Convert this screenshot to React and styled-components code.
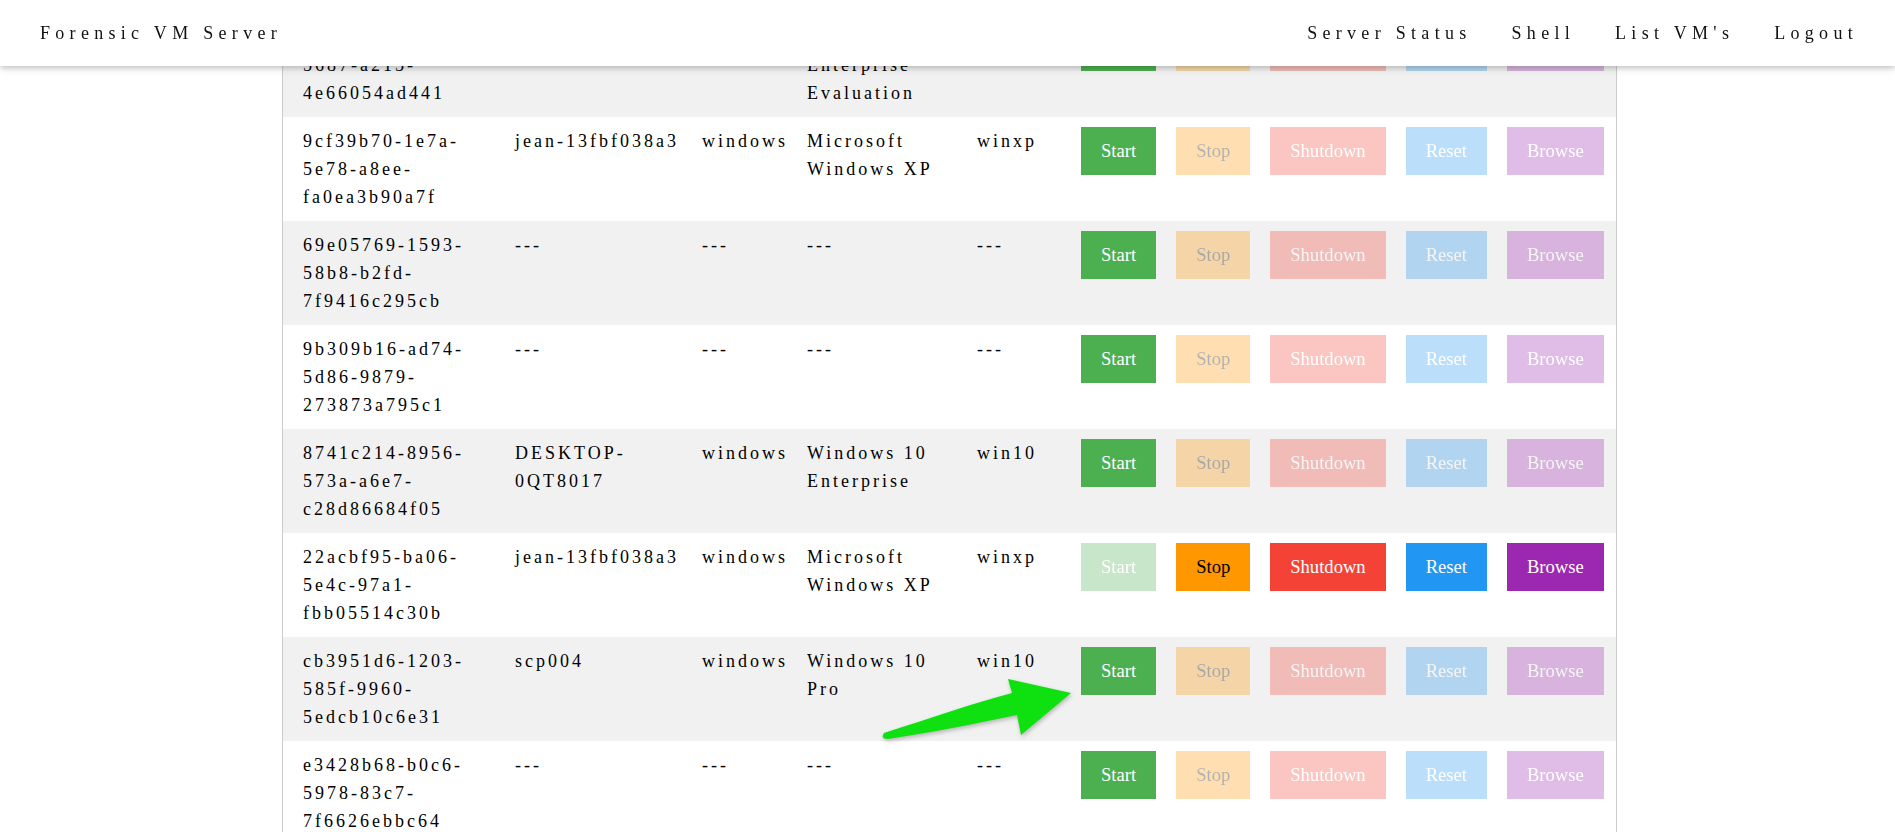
import React from 'react';
import styled, { createGlobalStyle } from "styled-components";

const Global = createGlobalStyle`
html, body {
  margin: 0;
  padding: 0;
  overflow: hidden;
  background: #fff;
  font-family: "Liberation Serif", "Times New Roman", serif;
  color: #000;
}
`

const TopBar = styled.div`
position: fixed;
top: 0;
left: 0;
right: 0;
height: 66px;
display: flex;
align-items: center;
padding: 0 17px 0 20px;
background: #fff;
box-shadow: 0 2px 5px 0 rgba(0,0,0,0.16), 0 2px 10px 0 rgba(0,0,0,0.12);
z-index: 2;
`
const Brand = styled.div`
padding: 0 20px;
font-size: 18px;
letter-spacing: 5.3px;
color: #111;
`
const NavLinks = styled.div`
margin-left: auto;
display: flex;
`
const NavLink = styled.a`
padding: 0 20px;
font-size: 18px;
letter-spacing: 5.3px;
color: #111;
text-decoration: none;
`
const Page = styled.div`
padding-top: 13px;
`
const Tabela = styled.div`
width: 1333px;
margin: 0 0 0 282px;
border-left: 1px solid #ccc;
border-right: 1px solid #ccc;
`
const Linha = styled.div`
display: grid;
grid-template-columns: 212px 187px 105px 170px 104px 1fr;
padding: 10px 0 10px 20px;
background: ${p => p.cinza ? '#f1f1f1' : '#fff'};
font-size: 18px;
line-height: 28px;
letter-spacing: 3px;
`
const Celula = styled.div`
padding-right: 16px;
`
const Acoes = styled.div`
display: flex;
gap: 20px;
align-items: flex-start;
`
const Botao = styled.button`
border: none;
padding: 10px 20px;
font-family: "Liberation Serif", "Times New Roman", serif;
font-size: 18.6px;
line-height: 28px;
letter-spacing: 0;
background: ${p => p.cor};
color: ${p => p.texto};
opacity: ${p => p.desligado ? 0.3 : 1};
cursor: ${p => p.desligado ? 'not-allowed' : 'pointer'};
`
const Seta = styled.svg`
position: absolute;
left: 0;
top: 0;
width: 1895px;
height: 832px;
pointer-events: none;
z-index: 1;
filter: drop-shadow(1px 2px 2px rgba(0,0,0,0.25));
`

const maquinas = [
  { id: "3f1ad4c2-73b0-5687-a215-4e66054ad441", nome: "MSEDGEWIN10", os: "windows", osNome: "Windows 10 Enterprise Evaluation", tipo: "win10", ligada: false },
  { id: "9cf39b70-1e7a-5e78-a8ee-fa0ea3b90a7f", nome: "jean-13fbf038a3", os: "windows", osNome: "Microsoft Windows XP", tipo: "winxp", ligada: false },
  { id: "69e05769-1593-58b8-b2fd-7f9416c295cb", nome: "---", os: "---", osNome: "---", tipo: "---", ligada: false },
  { id: "9b309b16-ad74-5d86-9879-273873a795c1", nome: "---", os: "---", osNome: "---", tipo: "---", ligada: false },
  { id: "8741c214-8956-573a-a6e7-c28d86684f05", nome: "DESKTOP-0QT8017", os: "windows", osNome: "Windows 10 Enterprise", tipo: "win10", ligada: false },
  { id: "22acbf95-ba06-5e4c-97a1-fbb05514c30b", nome: "jean-13fbf038a3", os: "windows", osNome: "Microsoft Windows XP", tipo: "winxp", ligada: true },
  { id: "cb3951d6-1203-585f-9960-5edcb10c6e31", nome: "scp004", os: "windows", osNome: "Windows 10 Pro", tipo: "win10", ligada: false },
  { id: "e3428b68-b0c6-5978-83c7-7f6626ebbc64", nome: "---", os: "---", osNome: "---", tipo: "---", ligada: false },
]

export default class App extends React.Component {
  render() {
    const linhas = maquinas.map((m, i) => {
      return (
        <Linha key={m.id} cinza={i % 2 === 0}>
          <Celula>{m.id}</Celula>
          <Celula>{m.nome}</Celula>
          <Celula>{m.os}</Celula>
          <Celula>{m.osNome}</Celula>
          <Celula>{m.tipo}</Celula>
          <Acoes>
            <Botao cor="#4CAF50" texto="#fff" desligado={m.ligada}>Start</Botao>
            <Botao cor="#ff9800" texto="#000" desligado={!m.ligada}>Stop</Botao>
            <Botao cor="#f44336" texto="#fff" desligado={!m.ligada}>Shutdown</Botao>
            <Botao cor="#2196F3" texto="#fff" desligado={!m.ligada}>Reset</Botao>
            <Botao cor="#9c27b0" texto="#fff" desligado={!m.ligada}>Browse</Botao>
          </Acoes>
        </Linha>
      )
    })
    return (
      <>
        <Global />
        <TopBar>
          <Brand>Forensic VM Server</Brand>
          <NavLinks>
            <NavLink href="#">Server Status</NavLink>
            <NavLink href="#">Shell</NavLink>
            <NavLink href="#">List VM's</NavLink>
            <NavLink href="#">Logout</NavLink>
          </NavLinks>
        </TopBar>
        <Page>
          <Tabela>{linhas}</Tabela>
        </Page>
        <Seta viewBox="0 0 1895 832">
          <path
            d="M 884 733 C 934 717, 974 703, 1012 693 L 1008 679 L 1071 693 L 1021 735 L 1017 715 C 974 724, 934 732, 888 739 Q 880 739 884 733 Z"
            fill="#0fe00f"
          />
        </Seta>
      </>
    )
  }
}
